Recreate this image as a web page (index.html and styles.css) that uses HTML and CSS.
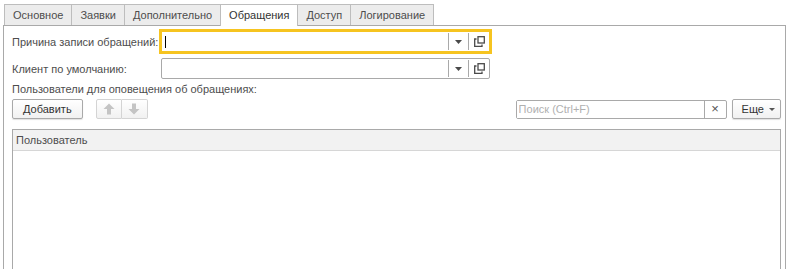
FILE: index.html
```html
<!DOCTYPE html>
<html lang="ru">

<head>
  <meta charset="UTF-8">
  <title>Обращения</title>
  <link rel="stylesheet" href="styles.css">
</head>

<body>
  <div class="tabs">
    <div class="tab">Основное</div>
    <div class="tab">Заявки</div>
    <div class="tab">Дополнительно</div>
    <div class="tab active">Обращения</div>
    <div class="tab">Доступ</div>
    <div class="tab">Логирование</div>
  </div>

  <div class="panel">
    <!-- поля формы -->
    <div class="form">
      <label class="label">Причина записи обращений:</label>
      <div class="field focused">
        <div class="field-text"><span class="caret"></span></div>
        <div class="field-btn">
          <svg width="7" height="4" viewBox="0 0 7 4"><path d="M0 0h7L3.5 4z" fill="#4a4a4a" /></svg>
        </div>
        <div class="field-btn">
          <svg width="11" height="11" viewBox="0 0 11 11" fill="none" stroke="#4a4a4a" stroke-width="1.3">
            <rect x="4" y="0.7" width="6.3" height="6.3" />
            <path d="M2.5 3H0.7v7.3H8V8.5" />
          </svg>
        </div>
      </div>

      <label class="label">Клиент по умолчанию:</label>
      <div class="field">
        <div class="field-text"></div>
        <div class="field-btn">
          <svg width="7" height="4" viewBox="0 0 7 4"><path d="M0 0h7L3.5 4z" fill="#4a4a4a" /></svg>
        </div>
        <div class="field-btn">
          <svg width="11" height="11" viewBox="0 0 11 11" fill="none" stroke="#4a4a4a" stroke-width="1.3">
            <rect x="4" y="0.7" width="6.3" height="6.3" />
            <path d="M2.5 3H0.7v7.3H8V8.5" />
          </svg>
        </div>
      </div>
    </div>

    <div class="caption">Пользователи для оповещения об обращениях:</div>

    <!-- командная панель -->
    <div class="toolbar">
      <button class="btn">Добавить</button>
      <div class="btn-group">
        <button class="btn icon" disabled>
          <svg width="12" height="12" viewBox="0 0 12 12"><path d="M6 0.5L11.5 6H8v5.5H4V6H0.5z" fill="#c4c4c4" /></svg>
        </button>
        <button class="btn icon" disabled>
          <svg width="12" height="12" viewBox="0 0 12 12"><path d="M6 11.5L11.5 6H8V0.5H4V6H0.5z" fill="#c4c4c4" /></svg>
        </button>
      </div>
      <div class="spacer"></div>
      <div class="search">
        <input class="search-input" type="text" placeholder="Поиск (Ctrl+F)">
        <div class="search-clear">×</div>
      </div>
      <button class="btn more">Еще <span class="more-arrow"></span></button>
    </div>

    <!-- таблица -->
    <div class="grid">
      <div class="grid-head">Пользователь</div>
    </div>
  </div>
</body>

</html>
```

FILE: styles.css
```css
/* основа */
* {
  box-sizing: border-box;
}

body {
  margin: 0;
  background: #fff;
  font-family: "Liberation Sans", Arial, sans-serif;
  font-size: 11px;
  color: #4d4d4d;
  height: 269px;
  overflow: hidden;
  display: flex;
  flex-direction: column;
}

/* вкладки */
.tabs {
  display: flex;
  padding: 4px 0 0 4px;
  height: 25px;
  flex: none;
}

.tab {
  height: 21px;
  line-height: 20px;
  padding: 0 8px;
  background: #ececec;
  border: 1px solid #bdbdbd;
  border-bottom: none;
  margin-left: -1px;
  color: #4d4d4d;
}

.tab:first-child {
  margin-left: 0;
}

.tab.active {
  background: #fff;
  height: 22px;
  position: relative;
  z-index: 1;
  color: #333;
}

/* панель вкладки */
.panel {
  flex: 1;
  margin: 0 4px 0 3px;
  border: 1px solid #a9a9a9;
  border-bottom: none;
  padding: 5px 4px 0 8px;
  display: flex;
  flex-direction: column;
}

.form {
  display: grid;
  grid-template-columns: 149px 329px;
  row-gap: 6px;
  align-items: center;
}

.label {
  white-space: nowrap;
}

.field {
  display: flex;
  height: 21px;
  border: 1px solid #a9a9a9;
  border-radius: 2px;
  background: #fff;
}

.field.focused {
  outline: 2px solid #f6c420;
  border-color: #f6c420;
  border-radius: 0;
}

.field-text {
  flex: 1;
  display: flex;
  align-items: center;
  padding-left: 3px;
}

.caret {
  width: 1px;
  height: 12px;
  background: #000;
}

.field-btn {
  width: 20px;
  display: flex;
  align-items: center;
  justify-content: center;
  border-left: 1px solid #a9a9a9;
  margin: 1px 0;
}

.field-btn:last-child {
  width: 21px;
}

.caption {
  margin-top: 3px;
  height: 14px;
  line-height: 14px;
}

/* кнопки */
.toolbar {
  display: flex;
  align-items: center;
  margin-top: 3px;
  height: 20px;
  flex: none;
}

.btn {
  font: inherit;
  color: #333;
  height: 20px;
  padding: 0 10px;
  background: linear-gradient(#fff, #f1f1f1);
  border: 1px solid #a9a9a9;
  border-radius: 2px;
  box-shadow: 0 1px 1px rgba(0, 0, 0, .12);
}

.btn-group {
  display: flex;
  margin-left: 13px;
}

.btn.icon {
  width: 26px;
  padding: 0;
  display: flex;
  align-items: center;
  justify-content: center;
  border-color: #d4d4d4;
  box-shadow: none;
  border-radius: 0;
}

.btn.icon:first-child {
  border-radius: 2px 0 0 2px;
}

.btn.icon:last-child {
  border-left: none;
  border-radius: 0 2px 2px 0;
}

.spacer {
  flex: 1;
}

/* поиск */
.search {
  display: flex;
  width: 211px;
  height: 19px;
  border: 1px solid #a9a9a9;
  border-radius: 2px;
}

.search-input {
  flex: 1;
  min-width: 0;
  border: none;
  outline: none;
  padding: 0 2px;
  font: inherit;
}

.search-input::placeholder {
  color: #b0b0b0;
}

.search-clear {
  width: 22px;
  border-left: 1px solid #a9a9a9;
  text-align: center;
  line-height: 16px;
  font-size: 13px;
  color: #555;
}

.btn.more {
  margin-left: 5px;
  padding: 0 5px 0 9px;
  display: flex;
  align-items: center;
  gap: 5px;
}

.more-arrow {
  width: 0;
  height: 0;
  border-left: 3px solid transparent;
  border-right: 3px solid transparent;
  border-top: 3px solid #555;
}

/* таблица */
.grid {
  flex: 1;
  margin-top: 10px;
  border: 1px solid #a9a9a9;
  border-bottom: none;
}

.grid-head {
  height: 21px;
  line-height: 20px;
  padding-left: 3px;
  background: #f2f2f2;
  border-bottom: 1px solid #d6d6d6;
  color: #4d4d4d;
}
```
